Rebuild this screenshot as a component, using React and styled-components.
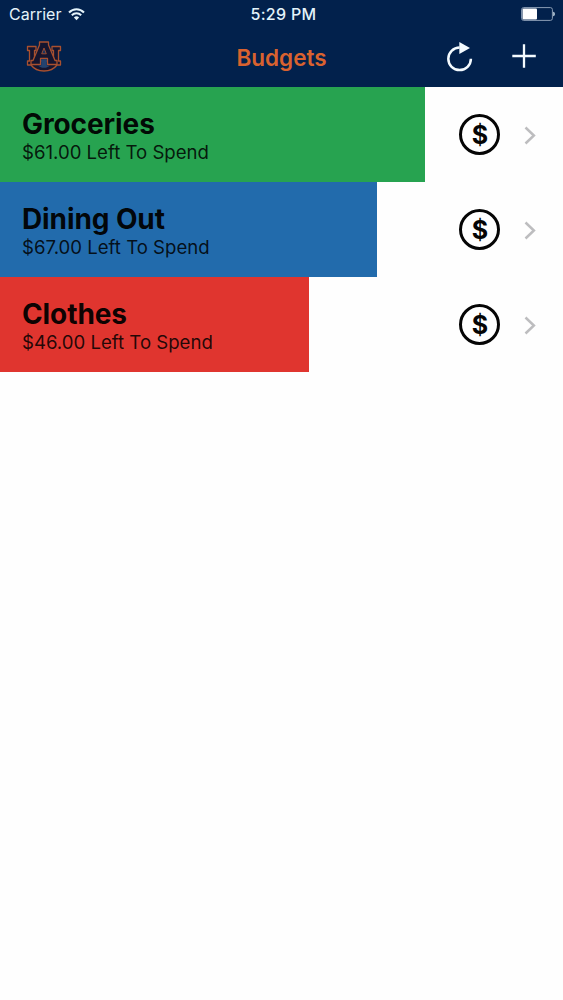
import React from 'react';
import styled, { createGlobalStyle } from 'styled-components';

const GlobalStyle = createGlobalStyle`
    body {
        margin: 0;
        background-color: #fefefe;
        font-family: Inter, 'Liberation Sans', sans-serif;
    }

    svg {
        display: block;
        flex: none;
    }
`;

const Screen = styled.div`
    min-height: 1000px;
    overflow: hidden;
`;

const Header = styled.header`
    box-sizing: border-box;
    height: 87px;
    background-color: #02214c;
`;

const StatusBar = styled.div`
    display: grid;
    grid-template-columns: 1fr auto 1fr;
    align-items: center;
    box-sizing: border-box;
    height: 28px;
    padding: 0 8px 0 9px;
    color: #e4f3fa;
    font-size: 16px;
    line-height: 28px;
`;

const Carrier = styled.div`
    display: flex;
    align-items: center;
    gap: 7px;
`;

const Time = styled.div`
    padding-left: 3px;
    font-weight: 500;
    font-size: 16px;
    letter-spacing: 0.3px;
`;

const Power = styled.div`
    display: flex;
    justify-content: flex-end;
`;

const NavBar = styled.nav`
    display: grid;
    grid-template-columns: 1fr auto 1fr;
    align-items: center;
    height: 55px;
    padding: 0 26px;
`;

const Title = styled.h1`
    margin: 0;
    padding-top: 2px;
    color: #d9622f;
    font-size: 22.5px;
    font-weight: 600;
    line-height: 55px;
`;

const Actions = styled.div`
    display: flex;
    align-items: center;
    justify-content: flex-end;
    gap: 39px;
`;

const Row = styled.div`
    display: flex;
    justify-content: space-between;
    height: 95px;
    background: linear-gradient(
        to right,
        ${props => props.$color} ${props => props.$filled}px,
        transparent ${props => props.$filled}px
    );
`;

const Info = styled.div`
    padding: 21px 0 0 22px;
`;

const Name = styled.h2`
    margin: 0;
    color: rgba(0, 0, 0, 0.94);
    font-size: 28px;
    font-weight: 700;
    line-height: 32px;
    letter-spacing: -0.1px;
`;

const Left = styled.p`
    margin: 0;
    color: rgba(0, 0, 0, 0.86);
    font-size: 18.6px;
    line-height: 25px;
`;

const Controls = styled.div`
    display: flex;
    align-items: center;
    gap: 24px;
    padding-right: 27px;
`;

const Coin = styled.div`
    box-sizing: border-box;
    width: 41px;
    height: 41px;
    border: 3px solid #050505;
    border-radius: 50%;
    color: #050505;
    font-size: 25px;
    font-weight: 700;
    line-height: 36px;
    text-align: center;
    text-indent: 1px;
`;

const Logo = () => (
    <svg width="36" height="31" viewBox="0 0 36 31" fill="#15152f" stroke="#a9502f" strokeWidth="1.300" strokeLinejoin="round">
        <path d="M1.500 5.500H10V9.500H8.500V20H27.500V9.500H26V5.500H34.500V9.500H32.500V20H34.500V24H31C28 28 24 30 18 30S8 28 5 24H1.500V20H3.500V9.500H1.500Z" />
        <path d="M13.500 1H22.500V4L29 19.500H31V23.500H21.500V17.500H14.500V23.500H5V19.500H7L13.500 4Z" />
        <path d="M18 7L15.700 12.800H20.300Z" fill="#173660" strokeWidth="0.900" />
        <path d="M15.200 18.200H20.800V24.500H24C22 26.300 20.500 26.800 18 26.800S14 26.300 12 24.500H15.200Z" stroke="none" fill="#24436f" />
    </svg>
);

const Wifi = () => (
    <svg width="17" height="13" viewBox="0 0 17 13" fill="none" stroke="#e4f3fa" strokeWidth="2">
        <path d="M1 4.500C5.300 0 11.700 0 16 4.500" />
        <path d="M3.800 7.300C6.500 4.600 10.500 4.600 13.200 7.300" />
        <path d="M8.500 12.200L5.900 9.400C7.400 8 9.600 8 11.100 9.400Z" fill="#e4f3fa" stroke="none" />
    </svg>
);

const Battery = () => (
    <svg width="34" height="14" viewBox="0 0 34 14">
        <rect x="0.600" y="0.600" width="30.800" height="12.800" rx="2" fill="none" stroke="#8b9db5" strokeWidth="1" />
        <rect x="1.500" y="1.500" width="14.500" height="11" rx="1" fill="#fff" />
        <path d="M32.300 4.800C34.200 5.200 34.200 8.800 32.300 9.200Z" fill="#e4f3fa" />
    </svg>
);

const Refresh = () => (
    <svg width="26" height="30" viewBox="0 0 26 30">
        <path d="M12.600 5.500A11.300 11.300 0 1 0 23.900 16.800" fill="none" stroke="#f4fbff" strokeWidth="2.500" />
        <path d="M12.300 0V12L23 6Z" fill="#f4fbff" />
    </svg>
);

const Plus = () => (
    <svg width="25" height="25" viewBox="0 0 25 25" stroke="#f4fbff" strokeWidth="2.300">
        <path d="M12 0.300V23.700M0.300 12H23.800" />
    </svg>
);

const Chevron = () => (
    <svg width="12" height="20" viewBox="0 0 12 20" fill="none" stroke="#bdbdbf" strokeWidth="2.500">
        <path d="M1.500 2.500L9.900 10.500L1.500 18.500" />
    </svg>
);

const budgets = [
    { name: 'Groceries', left: '$61.00', color: '#27a350', filled: 425 },
    { name: 'Dining Out', left: '$67.00', color: '#226bac', filled: 377 },
    { name: 'Clothes', left: '$46.00', color: '#e0352f', filled: 309.5 }
];

const Budget = ({ name, left, color, filled }) => (
    <Row $color={color} $filled={filled}>
        <Info>
            <Name>{name}</Name>
            <Left>{left} Left To Spend</Left>
        </Info>
        <Controls>
            <Coin>$</Coin>
            <Chevron />
        </Controls>
    </Row>
);

const App = () => (
    <Screen>
        <GlobalStyle />
        <Header>
            <StatusBar>
                <Carrier>
                    Carrier
                    <Wifi />
                </Carrier>
                <Time>5:29 PM</Time>
                <Power>
                    <Battery />
                </Power>
            </StatusBar>
            <NavBar>
                <Logo />
                <Title>Budgets</Title>
                <Actions>
                    <Refresh />
                    <Plus />
                </Actions>
            </NavBar>
        </Header>
        {budgets.map(budget => (
            <Budget key={budget.name} {...budget} />
        ))}
    </Screen>
);

export default App;
